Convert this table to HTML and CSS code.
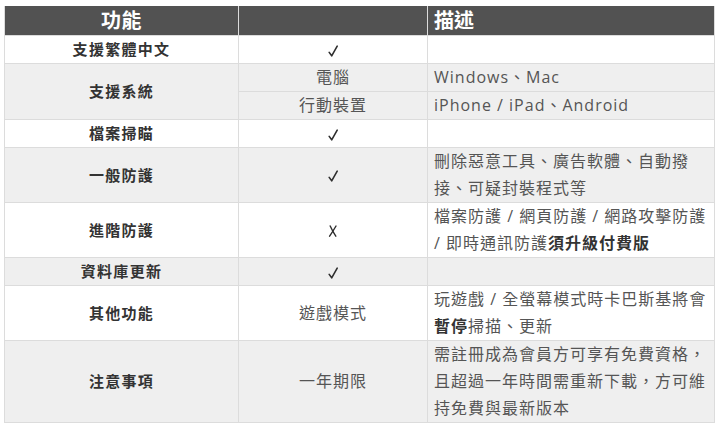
FILE: index.html
```html
<!DOCTYPE html>
<html lang="zh-Hant">
<head>
<meta charset="utf-8">
<link rel="stylesheet" href="styles.css">
</head>
<body>
<table class="cmp">
  <colgroup>
    <col class="c1"><col class="c2"><col class="c3">
  </colgroup>
  <thead>
    <tr><th class="h-feat">功能</th><th></th><th class="h-desc">描述</th></tr>
  </thead>
  <tbody>
    <tr class="w"><td class="feat">支援繁體中文</td><td class="mid"><svg class="mark" viewBox="0 0 10 12" aria-label="✓"><path d="M1.2 7.4 L3.7 10.8 L9.2 1.2"/></svg></td><td class="desc"></td></tr>
    <tr class="g"><td class="feat" rowspan="2">支援系統</td><td class="mid">電腦</td><td class="desc">Windows、Mac</td></tr>
    <tr class="g"><td class="mid">行動裝置</td><td class="desc">iPhone / iPad、Android</td></tr>
    <tr class="w"><td class="feat">檔案掃瞄</td><td class="mid"><svg class="mark" viewBox="0 0 10 12" aria-label="✓"><path d="M1.2 7.4 L3.7 10.8 L9.2 1.2"/></svg></td><td class="desc"></td></tr>
    <tr class="g"><td class="feat">一般防護</td><td class="mid"><svg class="mark" viewBox="0 0 10 12" aria-label="✓"><path d="M1.2 7.4 L3.7 10.8 L9.2 1.2"/></svg></td><td class="desc">刪除惡意工具、廣告軟體、自動撥接、可疑封裝程式等</td></tr>
    <tr class="w"><td class="feat">進階防護</td><td class="mid"><svg class="mark cross" viewBox="0 0 10 12" aria-label="✗"><path d="M2.2 1 C3.6 4 5.6 8 7.8 11.2"/><path d="M8 1 C6 4.5 4 7.8 1.6 11.2"/></svg></td><td class="desc">檔案防護 / 網頁防護 / 網路攻擊防護 / 即時通訊防護<b>須升級付費版</b></td></tr>
    <tr class="g"><td class="feat">資料庫更新</td><td class="mid"><svg class="mark" viewBox="0 0 10 12" aria-label="✓"><path d="M1.2 7.4 L3.7 10.8 L9.2 1.2"/></svg></td><td class="desc"></td></tr>
    <tr class="w"><td class="feat">其他功能</td><td class="mid">遊戲模式</td><td class="desc">玩遊戲 / 全螢幕模式時卡巴斯基將會<b>暫停</b>掃描、更新</td></tr>
    <tr class="g"><td class="feat">注意事項</td><td class="mid">一年期限</td><td class="desc">需註冊成為會員方可享有免費資格，且超過一年時間需重新下載，方可維持免費與最新版本</td></tr>
  </tbody>
</table>
</body>
</html>
```

FILE: styles.css
```css
html, body {
  margin: 0;
  background: #ffffff;
}
body {
  padding: 6px 0 0 4px;
  font-family: "Open Sans", "Noto Sans CJK TC", sans-serif;
  color: #4a4a4a;
}
.cmp {
  border-collapse: collapse;
  width: 710px;
  table-layout: fixed;
}
.c1 { width: 234px; }
.c2 { width: 189px; }
.c3 { width: 287px; }
.cmp th {
  background: #525252;
  color: #ffffff;
  font-size: 20px;
  font-weight: 700;
  line-height: 29px;
  height: 29px;
  padding: 0 6px;
  border: 1px solid #dcdcdc;
  border-top: none;
}
.h-feat { text-align: center; letter-spacing: 0.5px; }
.h-desc { text-align: left; }
.cmp td {
  border: 1px solid #dcdcdc;
  font-size: 16px;
  line-height: 27px;
  padding: 0 6px;
  vertical-align: middle;
}
.w td { background: #ffffff; }
.g td { background: #efefef; }
.cmp td.feat {
  text-align: center;
  font-weight: 700;
  font-size: 15px;
  color: #333333;
  letter-spacing: 1.3px;
}
.mid {
  text-align: center;
  letter-spacing: 1px;
  color: #555555;
}
.mark {
  display: inline-block;
  width: 10px;
  height: 12px;
  vertical-align: middle;
  fill: none;
  stroke: #2e2e2e;
  stroke-width: 1.6;
  stroke-linecap: round;
  stroke-linejoin: round;
}
.mark.cross {
  stroke-width: 1.4;
}
.desc {
  text-align: left;
  letter-spacing: 1px;
  color: #555555;
}
.desc b {
  color: #333333;
  font-weight: 700;
}
```
